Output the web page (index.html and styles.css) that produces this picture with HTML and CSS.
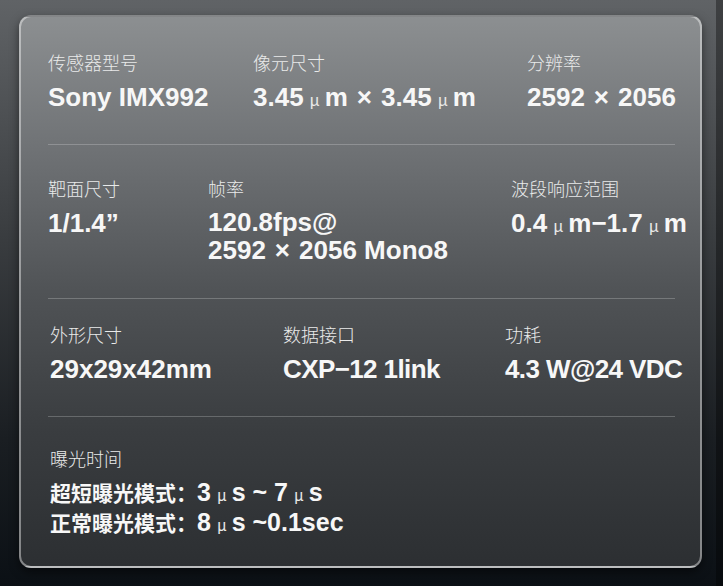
FILE: index.html
```html
<!DOCTYPE html>
<html lang="zh-CN">
<head>
<meta charset="utf-8">
<title>规格参数</title>
<link rel="stylesheet" href="styles.css">
</head>
<body>
<div class="card">
  <section class="row row1">
    <div class="cell">
      <div class="label">传感器型号</div>
      <div class="value">Sony IMX992</div>
    </div>
    <div class="cell">
      <div class="label">像元尺寸</div>
      <div class="value">3.45<span class="mu">μ</span>m<span class="x">×</span>3.45<span class="mu">μ</span>m</div>
    </div>
    <div class="cell">
      <div class="label">分辨率</div>
      <div class="value">2592<span class="x">×</span>2056</div>
    </div>
  </section>
  <section class="row row2">
    <div class="cell">
      <div class="label">靶面尺寸</div>
      <div class="value">1/1.4”</div>
    </div>
    <div class="cell">
      <div class="label">帧率</div>
      <div class="value multi">120.8fps@<br>2592<span class="x">×</span>2056 Mono8</div>
    </div>
    <div class="cell">
      <div class="label">波段响应范围</div>
      <div class="value">0.4<span class="mu">μ</span>m−1.7<span class="mu">μ</span>m</div>
    </div>
  </section>
  <section class="row row3">
    <div class="cell">
      <div class="label">外形尺寸</div>
      <div class="value">29x29x42mm</div>
    </div>
    <div class="cell">
      <div class="label">数据接口</div>
      <div class="value tight">CXP−12 1link</div>
    </div>
    <div class="cell">
      <div class="label">功耗</div>
      <div class="value tight">4.3 W@24 VDC</div>
    </div>
  </section>
  <section class="row row4">
    <div class="cell">
      <div class="label">曝光时间</div>
      <div class="value small">超短曝光模式：<span class="num">3<span class="mu">μ</span>s ~ 7<span class="mu">μ</span>s</span><br>正常曝光模式：<span class="num">8<span class="mu">μ</span>s ~0.1sec</span></div>
    </div>
  </section>
</div>
</body>
</html>
```

FILE: styles.css
```css
html, body {
  margin: 0;
  padding: 0;
}
body {
  width: 723px;
  height: 586px;
  overflow: hidden;
  background: linear-gradient(180deg, #606366 0%, #3a3d40 40%, #1a1e22 75%, #0b1015 100%);
  box-shadow: inset -7px 0 0 rgba(0, 0, 0, 0.35);
  font-family: "Liberation Sans", "Noto Sans CJK SC", sans-serif;
  color: #f5f5f5;
}
.card {
  box-sizing: border-box;
  margin: 15px 0 0 19px;
  width: 683px;
  height: 553px;
  border: 2px solid rgba(255, 255, 255, 0.42);
  border-radius: 12px;
  background: linear-gradient(180deg, #8c8f91 0%, #6e7174 25%, #505356 50%, #3a3d40 75%, #2c2f32 100%);
  box-shadow: 0 4px 10px rgba(0, 0, 0, 0.5);
  display: flex;
  flex-direction: column;
}
.row {
  display: grid;
  margin: 0 25px 0 27px;
}
.row + .row {
  border-top: 1px solid rgba(255, 255, 255, 0.22);
}
.row1 {
  grid-template-columns: 205px 274px 1fr;
  padding: 33px 0 30px;
}
.row2 {
  grid-template-columns: 160px 303px 1fr;
  padding: 31px 0 34px;
}
.row3 {
  grid-template-columns: 233px 222px 1fr;
  padding: 23px 0 32px 2px;
}
.row4 {
  grid-template-columns: 1fr;
  padding: 29px 0 0 2px;
}
.label {
  font-family: "Noto Sans CJK SC", sans-serif;
  font-weight: 300;
  font-size: 18px;
  line-height: 24px;
  color: #e9eaea;
  margin-bottom: 8px;
}
.value {
  font-weight: 700;
  font-size: 26px;
  line-height: 30px;
  color: #f7f7f7;
  white-space: nowrap;
}
.value.tight {
  letter-spacing: -0.6px;
}
.value.multi {
  line-height: 28px;
}
.value.small {
  font-size: 21px;
  line-height: 28px;
}
.num {
  font-size: 25px;
}
.mu {
  font-family: "Noto Sans CJK SC", sans-serif;
  font-weight: 400;
  font-size: 0.62em;
  margin: 0 5px 0 6px;
  color: #e8e8e8;
}
.x {
  margin: 0 9px;
}
```
